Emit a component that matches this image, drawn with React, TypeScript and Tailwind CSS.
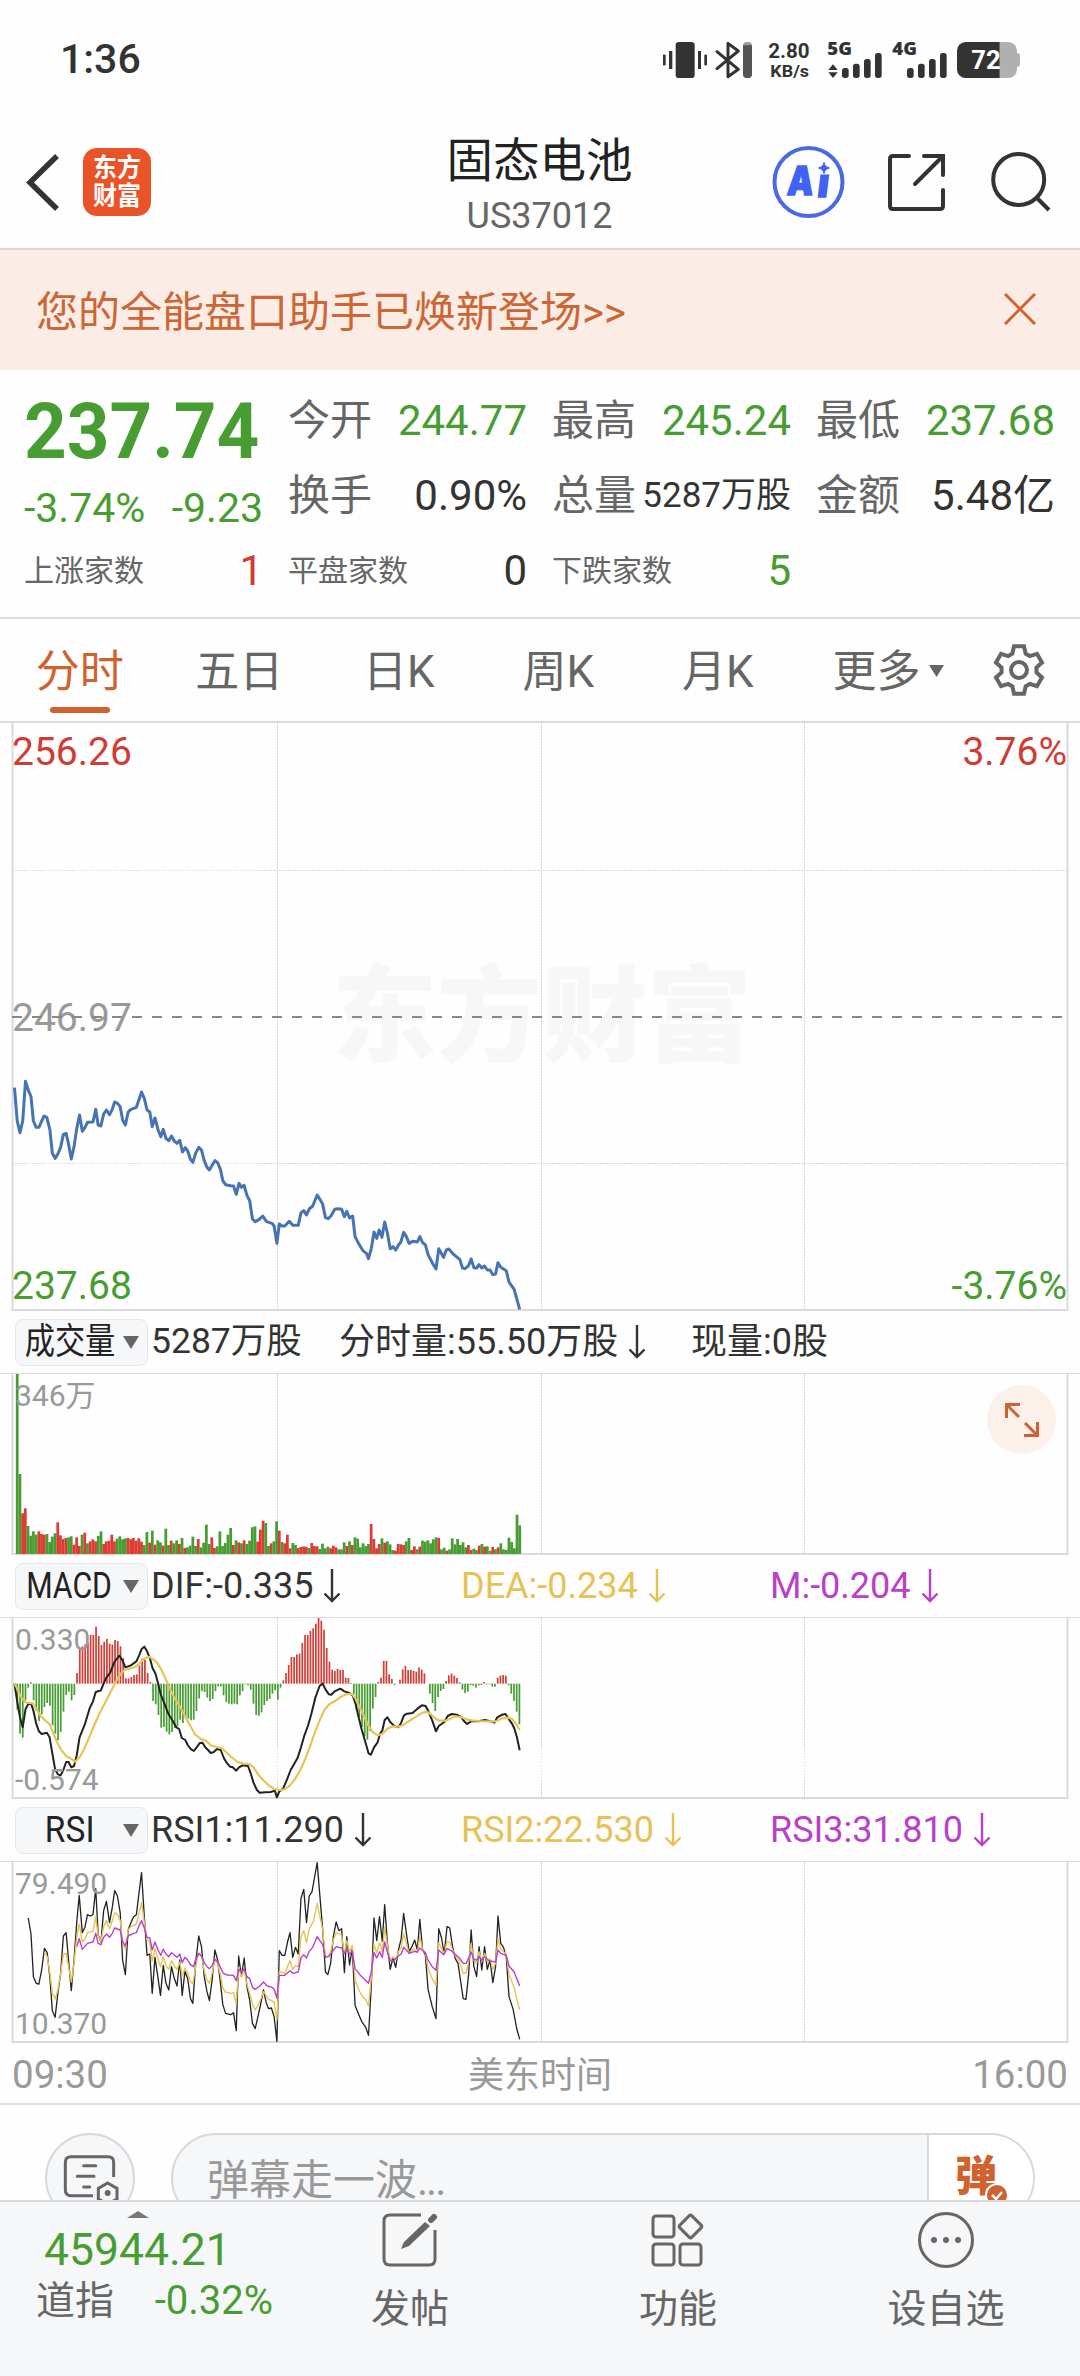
import React from "react";

const FONT = "font-['Roboto','Noto_Sans_CJK_SC',sans-serif]";

const PRICE =
  "42,143 50,243 58,278 66,243 74,124 82,150 90,170 97,243 105,262 113,262 121,243 128,228 136,232 145,270 152,340 160,355 168,342 176,322 184,283 192,280 199,312 207,357 215,320 223,265 231,225 239,274 247,262 254,247 270,246 278,208 285,255 293,258 301,222 309,210 318,224 326,208 333,186 341,190 349,200 356,240 364,255 372,217 380,208 396,202 404,178 411,156 419,175 427,210 435,216 442,260 450,234 459,270 467,290 474,268 482,295 490,302 498,288 506,303 514,310 522,301 530,336 538,323 545,333 553,358 560,367 568,340 577,322 585,330 593,362 601,382 608,390 616,376 624,362 632,368 640,388 647,422 655,434 670,437 678,438 686,463 694,430 701,442 709,436 717,466 725,482 733,537 741,545 752,539 763,528 774,545 790,550 796,558 804,610 811,552 819,558 827,558 840,544 850,556 866,556 874,518 882,512 890,525 898,507 908,498 921,465 929,478 937,493 945,533 953,536 961,528 972,508 982,506 992,508 1000,530 1007,514 1015,534 1024,528 1031,590 1040,608 1054,632 1064,640 1070,656 1078,626 1086,576 1094,595 1101,570 1109,592 1117,546 1125,580 1133,626 1141,620 1149,630 1157,615 1164,606 1172,577 1180,590 1188,610 1198,604 1212,606 1219,590 1227,608 1235,614 1243,644 1255,668 1266,687 1274,626 1288,652 1296,630 1303,627 1318,644 1335,658 1343,684 1350,686 1360,678 1368,657 1376,683 1384,684 1391,674 1399,684 1407,678 1415,690 1423,690 1431,704 1439,702 1446,668 1454,682 1470,692 1478,726 1493,748 1501,778 1509,808";

// Minute volumes; a negative number is a red bar.
const VOLUME = [
  540, 240, -122, -137, 84, 55, 68, 58, -68, -60, -58, 60, 36, 52, 62, -95, -56, -45, -48, 50, 53, -28, -50, -24, 58, -64, 32, -38, -44, -38,
  54, 68, -30, -38, -40, -58, -38, 46, 53, 44, 47, -48, -44, -48, -40, -47, -37, 27, 66, -34, 70, -28, 41, 35, -25, 76, 27, -40, 32, 41, -30,
  48, -18, 20, 25, 52, 24, -45, 20, 34, 88, 30, -50, -18, 23, 68, 24, 33, 58, 78, -27, 41, -35, 32, -41, 30, 40, 80, 83, -37, -73, -100, 93,
  24, -32, 38, 98, -70, 36, -32, -58, -17, 33, 27, -18, -21, -23, -21, 18, -33, -24, -23, 15, 31, 17, 22, -17, -25, -20, 14, 14, 35, -24, 38,
  -27, 50, 46, 20, 32, 24, 30, -90, -45, -17, -30, 47, -34, 38, 29, 12, -10, -30, -29, -27, 38, 48, -12, -23, 14, -22, 40, 37, 41, 32, 44,
  50, -48, 14, 19, -10, 14, 47, 29, 45, 27, 35, 20, -27, -12, 16, 12, -25, 30, -22, 23, 10, -21, 14, -20, 32, 14, 12, 49, 36, 17, 118, 86,
];

const MACD = [
  0, -78, -150, -162, -50, -12, 4, -50, -82, -112, -92, -70, -58, -66, -125, -150, -170, -145, -84, -34, -24, -50, -34, 32, 108, 112, 118,
  122, 146, 146, 171, 143, 116, 126, 134, 120, 117, 131, 128, 112, 77, 16, 16, 20, 26, 28, 54, 75, 72, 32, 5, -52, -62, -94, -132, -130, -144,
  -152, -145, -133, -128, -108, -118, -102, -105, -110, -108, -82, -44, -22, -25, -42, -52, -46, -22, -8, -8, -35, -55, -60, -62, -60, -62,
  -35, -22, -2, -5, -18, -60, -94, -96, -86, -64, -52, -46, -30, -20, -48, -12, 10, 32, 56, 80, 80, 88, 90, 122, 146, 146, 158, 166, 180, 197,
  189, 162, 107, 66, 42, 38, 44, 41, 41, 18, 17, 2, -32, -78, -100, -130, -158, -168, -142, -75, -40, 5, 18, 68, 68, 28, 14, -4, 0, 12, 43,
  53, 41, 41, 38, 36, 49, 42, 31, 0, -30, -58, -82, -40, -22, -16, 8, 25, 30, 24, 17, 4, -18, -28, -24, -4, -6, -12, -5, -4, 5, -2, -2, -9,
  -9, 18, 24, 26, 24, -5, -30, -52, -84, -122,
];

const DIF =
  "42,371 50,425 58,472 66,502 74,448 82,432 90,430 97,452 105,490 113,514 121,522 136,518 144,532 152,580 160,628 168,643 176,646 184,630 192,606 199,606 207,622 215,618 223,585 231,532 246,494 260,446 270,424 278,396 293,391 301,370 309,352 320,338 333,304 347,287 356,302 364,322 380,316 396,304 404,286 412,266 419,260 427,274 435,294 443,325 451,340 459,370 467,404 475,424 489,462 500,480 512,502 520,507 528,534 538,540 545,555 555,568 563,573 571,562 580,549 588,548 596,562 604,570 612,579 620,577 630,567 641,570 650,594 658,608 668,620 676,622 686,632 694,622 704,616 720,618 728,640 736,668 746,690 754,698 770,697 786,696 798,692 804,712 811,694 822,686 832,662 844,630 864,594 874,562 884,526 894,498 904,462 916,412 928,378 937,371 945,388 955,403 962,404 972,394 988,386 1000,394 1012,398 1024,406 1032,430 1040,466 1050,508 1062,550 1070,580 1077,584 1086,562 1096,548 1104,520 1110,512 1117,480 1125,472 1133,486 1145,498 1157,502 1165,488 1173,466 1182,461 1198,459 1212,446 1225,436 1236,438 1244,454 1256,484 1266,514 1274,498 1290,486 1300,468 1312,462 1326,464 1338,470 1348,484 1356,492 1368,484 1390,484 1408,480 1424,484 1436,488 1444,472 1458,464 1468,462 1478,478 1486,490 1493,504 1501,532 1509,571";
const DEA =
  "42,371 50,386 60,410 74,427 95,430 105,446 118,468 132,482 145,494 155,520 165,545 178,570 192,588 206,596 218,605 232,590 246,563 260,530 275,492 290,458 305,428 320,398 335,368 349,343 362,330 378,325 392,321 404,312 418,296 432,290 444,297 456,308 468,328 480,354 492,384 505,411 520,436 535,464 550,493 566,523 582,536 598,542 612,556 628,561 645,565 660,580 675,594 690,606 706,611 724,612 736,622 750,644 764,660 780,676 796,687 812,690 826,688 840,678 856,658 872,630 886,598 900,560 914,518 928,482 942,450 956,433 972,424 990,410 1008,402 1022,402 1032,416 1044,440 1056,466 1068,494 1082,516 1096,526 1110,522 1126,506 1140,499 1158,500 1172,494 1188,483 1204,473 1220,462 1238,454 1250,462 1262,474 1276,482 1292,482 1306,477 1322,469 1338,471 1354,478 1370,481 1392,483 1424,484 1440,484 1456,476 1474,473 1486,476 1496,488 1509,510";

const RSI1 =
  "82,354 90,402 97,530 105,550 113,552 121,510 129,445 137,458 145,535 152,632 160,652 168,580 176,520 184,408 192,398 199,480 207,572 215,480 223,365 230,286 239,398 247,380 254,344 262,348 270,344 278,266 285,405 293,426 301,332 309,304 318,368 326,322 333,272 341,288 349,338 356,480 364,524 372,390 380,368 388,350 396,344 404,276 411,218 419,350 427,466 435,462 442,580 450,472 459,535 466,586 474,496 482,550 490,570 498,500 506,535 514,558 522,480 529,586 537,514 545,536 553,596 560,610 568,490 577,408 585,440 593,530 601,575 608,602 616,540 624,450 632,480 640,548 647,614 655,640 670,644 678,638 686,692 693,468 701,530 709,474 717,560 725,600 733,670 741,686 749,650 757,612 765,570 773,608 780,626 788,624 796,650 804,724 811,452 819,466 827,466 835,426 842,398 850,472 858,442 866,462 874,295 882,268 890,368 898,288 906,275 914,228 921,188 929,290 937,388 945,516 952,524 960,490 968,410 976,366 984,392 992,386 1000,518 1007,410 1015,495 1023,446 1031,616 1040,640 1050,664 1062,682 1070,706 1078,560 1086,354 1094,422 1102,350 1110,424 1117,314 1125,430 1133,508 1141,474 1149,502 1157,450 1165,416 1172,340 1180,400 1188,455 1196,440 1204,420 1212,450 1219,358 1227,448 1235,464 1243,568 1255,620 1266,656 1274,386 1282,414 1290,462 1298,380 1306,384 1314,440 1322,476 1330,490 1337,540 1345,596 1353,598 1361,520 1368,390 1376,500 1384,530 1391,440 1399,510 1407,440 1415,508 1423,480 1431,548 1439,500 1446,348 1454,430 1462,442 1470,470 1478,590 1490,628 1500,684 1509,718";
const RSI2 =
  "129,456 137,470 145,520 152,580 160,597 168,570 176,520 184,464 192,460 199,500 207,546 215,490 223,410 230,372 239,426 247,418 254,398 270,394 278,350 285,408 293,424 301,380 309,362 318,386 326,362 333,338 341,344 349,362 356,425 364,448 372,390 380,380 396,372 404,338 411,308 419,366 427,420 435,425 442,484 450,446 459,478 466,500 474,470 482,496 490,508 498,482 506,498 514,508 522,486 529,528 537,504 545,520 553,544 560,552 568,500 577,460 585,470 593,512 601,540 608,550 616,520 624,478 632,492 640,524 647,564 655,576 670,580 678,578 686,612 693,502 701,530 709,510 717,552 725,580 733,612 741,630 749,616 757,598 765,575 780,598 796,606 804,660 811,514 827,520 842,482 850,508 858,498 866,500 874,410 882,392 890,428 898,386 910,364 921,310 929,350 937,388 945,468 952,470 960,456 968,420 976,398 992,406 1000,462 1007,422 1015,456 1023,436 1031,540 1042,570 1054,592 1062,598 1070,618 1078,536 1086,434 1094,458 1102,428 1110,456 1117,382 1125,436 1133,482 1141,470 1149,480 1157,455 1165,442 1172,402 1180,430 1188,460 1200,446 1212,458 1219,410 1227,448 1235,458 1243,504 1255,536 1266,556 1274,428 1290,462 1298,424 1306,428 1318,460 1334,485 1345,520 1353,520 1361,484 1368,430 1376,480 1384,490 1391,455 1399,484 1407,460 1415,484 1423,476 1431,508 1439,490 1446,416 1454,448 1470,462 1478,524 1493,562 1501,598 1509,630";
const RSI3 =
  "223,440 230,416 239,448 254,430 270,426 278,400 285,430 293,434 301,412 309,402 318,412 326,400 333,384 349,390 356,424 364,438 372,408 388,400 396,398 404,376 411,362 419,384 427,412 435,414 442,450 450,426 459,450 467,466 474,448 482,462 490,470 498,458 514,472 522,462 529,488 537,472 545,480 553,494 562,500 568,478 577,460 585,468 593,488 601,500 608,506 616,496 624,478 632,484 640,502 648,520 660,525 678,526 686,542 693,508 701,516 709,506 717,530 725,536 733,562 741,568 755,558 765,546 776,558 790,562 796,568 804,594 811,526 827,526 842,512 850,520 866,516 874,474 882,464 890,474 898,454 908,442 921,410 937,434 945,472 955,470 965,455 976,440 992,444 1000,460 1007,448 1015,462 1023,454 1031,506 1045,524 1058,538 1070,550 1078,516 1086,458 1094,474 1102,455 1110,472 1117,426 1125,458 1133,482 1145,480 1157,468 1165,462 1172,442 1188,460 1204,454 1212,456 1219,444 1235,458 1243,480 1255,500 1266,511 1274,450 1288,464 1298,446 1310,452 1334,474 1345,490 1354,490 1368,456 1376,478 1384,480 1391,470 1399,480 1407,470 1420,482 1439,486 1446,450 1454,460 1470,466 1478,498 1493,516 1509,558";

const GEAR = Array.from({ length: 6 }, (_, i) => {
  const a = (i * Math.PI) / 3;
  return [[-20, -49], [-15, -71], [15, -71], [20, -49]]
    .map(([x, y]) => `${(x * Math.cos(a) - y * Math.sin(a)).toFixed(1)},${(x * Math.sin(a) + y * Math.cos(a)).toFixed(1)}`)
    .join(" ");
}).join(" ");

function Line({ points, color, width }: { points: string; color: string; width: number }) {
  return <polyline points={points} fill="none" stroke={color} strokeWidth={width} strokeLinejoin="round" vectorEffect="non-scaling-stroke" />;
}

function Grid({ h }: { h: number }) {
  return (
    <g shapeRendering="crispEdges">
      {[277.5, 541.5, 804.5].map((x) => (
        <line key={x} x1={x} x2={x} y1={0} y2={h} stroke="#d4d4d4" strokeDasharray="1.5 1.5" />
      ))}
    </g>
  );
}

function Frame({ h }: { h: number }) {
  return <path d={`M12.5 0V${h - 1}H1067.5V0`} fill="none" stroke="#dadada" strokeWidth="2" />;
}

function DownArrow() {
  return (
    <svg className="ml-[10px] h-[36px] w-[18px]" viewBox="0 0 18 36" fill="none" stroke="currentColor" strokeWidth="2.4">
      <path d="M9 1V33M1.5 25.5L9 33L16.5 25.5" />
    </svg>
  );
}

function IndicatorBar({ name, squeeze, children }: { name: string; squeeze?: boolean; children: React.ReactNode }) {
  return (
    <div className="flex h-[62px] items-center pl-[15px] text-[36px] text-[#333]">
      <div className="flex h-[47px] w-[133px] items-center rounded-lg border border-[#e4e6ea] bg-[#f6f7f9] text-[#222]">
        <div className="flex w-[107px] justify-center">
          <span className={squeeze ? "scale-x-[0.84] whitespace-nowrap" : "scale-x-[0.93] whitespace-nowrap"}>{name}</span>
        </div>
        <svg className="h-[13px] w-[16px]" viewBox="0 0 16 13">
          <path d="M0 0H16L8 13Z" fill="#666" />
        </svg>
      </div>
      {children}
    </div>
  );
}

function Reading({ className, text }: { className: string; text: string }) {
  return (
    <div className={"flex items-center whitespace-nowrap " + className}>
      {text}
      <DownArrow />
    </div>
  );
}

function Quote({ label, value, color, small }: { label: string; value: string; color: string; small?: boolean }) {
  return (
    <div className="flex h-[75px] items-center justify-between whitespace-nowrap">
      <span className="text-[42px] text-[#666]">{label}</span>
      <span className={(small ? "text-[35px] " : "text-[42px] ") + color}>{value}</span>
    </div>
  );
}

function Count({ label, value, color }: { label: string; value: string; color: string }) {
  return (
    <div className="flex h-[75px] items-center justify-between">
      <span className="text-[30px] text-[#666]">{label}</span>
      <span className={"text-[42px] " + color}>{value}</span>
    </div>
  );
}

function StatusIcons() {
  return (
    <svg className="ml-auto mr-[56px] h-[40px] w-[364px] overflow-visible" viewBox="60 60 1092 120" fill="#333">
      <rect x="69" y="104" width="8" height="32" />
      <rect x="87" y="93" width="10" height="54" />
      <rect x="107" y="66" width="57" height="108" rx="10" />
      <rect x="174" y="93" width="9" height="54" />
      <rect x="193" y="104" width="8" height="32" />
      <path d="M231 95L295 148L264 170V70L295 93L231 146" fill="none" stroke="#333" strokeWidth="9" strokeLinecap="round" strokeLinejoin="round" />
      <rect x="309" y="66" width="27" height="108" rx="12" fill="#999" />
      <path d="M309 76H336V162a12 12 0 0 1-12 12h-3a12 12 0 0 1-12-12Z" fill="#555" />
      <g fontFamily="Roboto" fontWeight="700">
        <text x="385" y="113" fontSize="60" textLength="124" lengthAdjust="spacingAndGlyphs">2.80</text>
        <text x="391" y="170" fontSize="51" textLength="116" lengthAdjust="spacingAndGlyphs">KB/s</text>
      </g>
      <g fontFamily="Open Sans" fontWeight="800" fontSize="51">
        <text x="562" y="106" textLength="74" lengthAdjust="spacingAndGlyphs">5G</text>
        <text x="757" y="106" textLength="74" lengthAdjust="spacingAndGlyphs">4G</text>
      </g>
      <path d="M579 133L593 150H565ZM579 174L593 157H565Z" />
      {[606, 801].map((x) => (
        <g key={x}>
          <rect x={x} y="144" width="20" height="30" rx="8" />
          <rect x={x + 33} y="131" width="20" height="43" rx="8" />
          <rect x={x + 66} y="117" width="20" height="57" rx="8" />
          <rect x={x + 99} y="99" width="20" height="75" rx="8" />
        </g>
      ))}
      <path d="M1079 66h26a26 26 0 0 1 26 26v8h3a6 6 0 0 1 6 6v28a6 6 0 0 1-6 6h-3v8a26 26 0 0 1-26 26h-26Z" fill="#b0b0b0" />
      <path d="M1079 66H977a26 26 0 0 0-26 26v56a26 26 0 0 0 26 26h102Z" />
      <text x="994" y="147" fontFamily="Roboto" fontWeight="700" fontSize="80" fill="#fff" textLength="88" lengthAdjust="spacingAndGlyphs">72</text>
    </svg>
  );
}

function Header() {
  return (
    <div className="flex h-[132px] items-center">
      <svg className="mb-[2px] ml-[24px] h-[60px] w-[40px]" viewBox="0 0 40 60" fill="none" stroke="#333" strokeWidth="5.5">
        <path d="M33 5L6 31.500L33 58" />
      </svg>
      <div className="ml-[19px] flex size-[68px] items-center justify-center rounded-[14px] bg-[#ea5328]">
        <div className="flex scale-y-[1.08] flex-col text-[24px] font-bold leading-[26px] text-white">
          <span>东方</span>
          <span>财富</span>
        </div>
      </div>
      <div className="ml-[216px] flex w-[347px] flex-col items-center self-start pr-[2px]">
        <div className="mt-[15px] h-[60px] text-[46.500px] leading-[60px] text-[#222]">固态电池</div>
        <div className="h-[50px] text-[36px] leading-[50px] text-[#666]">US37012</div>
      </div>
      <svg className="ml-[54px] h-[80px] w-[290px]" viewBox="768 141 290 80" fill="none" stroke="#333" strokeWidth="4">
        <circle cx="808.5" cy="181" r="34" stroke="#4a69e2" />
        <g stroke="#4262f5" strokeWidth="1.5" fill="#4262f5" fontFamily="Inter" fontWeight="900" fontSize="40">
          <text transform="translate(786.500 194) skewX(-5)" textLength="26" lengthAdjust="spacingAndGlyphs">A</text>
          <text transform="translate(816.500 196) skewX(-7)" textLength="11" lengthAdjust="spacingAndGlyphs">ı</text>
        </g>
        <path d="M824 161.500C825 165 826 166 829.500 167C826 168 825 169 824 172.500C823 169 822 168 818.500 167C822 166 823 165 824 161.500Z" fill="#4262f5" stroke="#4262f5" strokeWidth="1" />
        <g strokeLinecap="round">
          <path d="M909 155H893Q890 155 890 158V205Q890 208 893 208H940Q943 208 943 205V189" />
          <path d="M924 155H943V174M942 156L915 183" />
        </g>
        <circle cx="1018.7" cy="178.5" r="25.5" />
        <path d="M1037 197L1049 209" />
      </svg>
    </div>
  );
}

const TABS = ["分时", "五日", "日K", "周K", "月K"];

export default function App() {
  return (
    <div className={"flex h-[2376px] w-[1080px] flex-col overflow-hidden bg-[#fefefe] leading-none " + FONT}>
      <div className="flex h-[116px] items-center pt-[3px]">
        <div className="ml-[60px] text-[41px] font-medium text-[#333]">1:36</div>
        <StatusIcons />
      </div>
      <Header />

      <div className="flex h-[122px] items-center justify-between border-t-2 border-[#d8d8da] bg-[#fbede5] pl-[36px] pr-[44px] text-[42px] text-[#ce6535]">
        <span className="pt-[6px]">您的全能盘口助手已焕新登场&gt;&gt;</span>
        <svg className="mb-[3px] size-[32px]" viewBox="0 0 32 32" fill="none" stroke="#d0622f" strokeWidth="3">
          <path d="M1 1L31 31M31 1L1 31" />
        </svg>
      </div>

      <div className="grid h-[249px] grid-cols-[239px_239px_239px_239px] gap-x-[25px] border-b-2 border-[#dcdcdc] pl-[24px] pt-[13px]">
        <div className="flex flex-col text-[#489d32]">
          <div className="flex h-[97px] items-center text-[78px] font-bold">
            <span className="origin-left scale-x-[0.955]">237.74</span>
          </div>
          <div className="flex h-[53px] items-center justify-between whitespace-nowrap pt-[3px] text-[41px]">
            <span>-3.74%</span>
            <span>-9.23</span>
          </div>
          <Count label="上涨家数" value="1" color="text-[#d03c34]" />
        </div>
        <div>
          <Quote label="今开" value="244.77" color="text-[#489d32]" />
          <Quote label="换手" value="0.90%" color="text-[#333]" />
          <Count label="平盘家数" value="0" color="text-[#333]" />
        </div>
        <div>
          <Quote label="最高" value="245.24" color="text-[#489d32]" />
          <Quote label="总量" value="5287万股" color="text-[#333]" small />
          <Count label="下跌家数" value="5" color="text-[#489d32]" />
        </div>
        <div>
          <Quote label="最低" value="237.68" color="text-[#489d32]" />
          <Quote label="金额" value="5.48亿" color="text-[#333]" />
        </div>
      </div>

      <div className="flex h-[104px] border-b-2 border-[#dcdcdc] text-[44px] text-[#666]">
        {TABS.map((t, i) => (
          <div key={t} className={"relative flex w-[159.5px] items-center justify-center pt-[4px] " + (i === 0 ? "text-[#d0622f]" : "")}>
            {t}
            {i === 0 && <div className="absolute bottom-[8px] h-[6px] w-[60px] rounded-full bg-[#d0622f]" />}
          </div>
        ))}
        <div className="flex items-center pl-[35px] pt-[4px]">
          更多
          <svg className="mb-[3px] ml-[8px] h-[12px] w-[15px]" viewBox="0 0 15 12">
            <path d="M0 0H15L7.5 12Z" fill="#666" />
          </svg>
        </div>
        <svg className="ml-[48px] mt-[24px] size-[54px]" viewBox="-81 -81 162 162" fill="none" stroke="#666" strokeWidth="12">
          <polygon points={GEAR} />
          <circle r="24" />
        </svg>
      </div>

      <div className="relative h-[588px] text-[39px]">
        <div className="absolute left-[332px] top-[230px] flex text-[105px] font-black leading-[130px] text-[#f7f7f7]">东方财富</div>
        <svg className="absolute left-0 top-0" width="1080" height="588">
          <Grid h={587} />
          <g shapeRendering="crispEdges" stroke="#d8d8d8" strokeDasharray="1.5 1.5">
            <line x1="12" x2="1068" y1="147.5" y2="147.5" />
            <line x1="12" x2="1068" y1="440.5" y2="440.5" />
          </g>
          <Frame h={588} />
        </svg>
        <div className="absolute left-[12px] top-[10px] text-[#d03c34]">256.26</div>
        <div className="absolute right-[13px] top-[10px] text-[#d03c34]">3.76%</div>
        <div className="absolute left-[12px] top-[276px] text-[#999]">246.97</div>
        <div className="absolute left-[12px] top-[544px] text-[#489d32]">237.68</div>
        <div className="absolute right-[13px] top-[544px] text-[#489d32]">-3.76%</div>
        <svg className="absolute left-0 top-0" width="1080" height="588">
          <line x1="12" x2="1064" y1="294" y2="294" stroke="#888" strokeWidth="2" strokeDasharray="10 10" />
          <g transform="translate(0 317) scale(.34439 .33333)">
            <Line points={PRICE} color="#4573b3" width={3} />
          </g>
        </svg>
      </div>

      <IndicatorBar name="成交量" squeeze>
        <span className="ml-[3px] w-[188px] whitespace-nowrap text-[35.500px]">5287万股</span>
        <Reading className="w-[352px]" text="分时量:55.50万股" />
        <span>现量:0股</span>
      </IndicatorBar>
      <div className="relative h-[182px] border-t border-[#dcdcdc] text-[30px] text-[#999]">
        <svg className="absolute left-0 top-0" width="1080" height="181">
          <Grid h={180} />
          <Frame h={181} />
          <g transform="translate(0 -74) scale(.34439 .33333)">
            {VOLUME.map((v, i) => (
              <rect key={i} x={46 + i * 7.845} y={762 - Math.abs(v)} width="8" height={Math.abs(v)} fill={v < 0 ? "#dc3c32" : "#489d32"} />
            ))}
          </g>
        </svg>
        <div className="absolute left-[15px] top-[7px]">346万</div>
        <div className="absolute right-[24px] top-[11px] flex size-[69px] items-center justify-center rounded-full bg-[#fbf1ea]">
          <svg className="size-[34px]" viewBox="0 0 34 34" fill="none" stroke="#ce6233" strokeWidth="3">
            <path d="M1.5 15V1.5H15M1.5 1.5L14 14M32.500 19V32.500H19M32.500 32.500L20 20" />
          </svg>
        </div>
      </div>

      <IndicatorBar name="MACD" squeeze>
        <Reading className="ml-[3px] w-[310px]" text="DIF:-0.335" />
        <Reading className="w-[309px] text-[#e6c255]" text="DEA:-0.234" />
        <Reading className="text-[#b940c8]" text="M:-0.204" />
      </IndicatorBar>
      <div className="relative h-[182px] border-t border-[#dcdcdc] text-[30px] text-[#999]">
        <svg className="absolute left-0 top-0" width="1080" height="181">
          <Grid h={180} />
          <Frame h={181} />
          <g transform="translate(0 -58) scale(.34439 .33333)">
            {MACD.map((v, i) => (
              <rect key={i} x={40 + i * 7.88} y={v > 0 ? 371 - v : 371} width="5" height={Math.abs(v)} fill={v > 0 ? "#d04038" : "#489d32"} />
            ))}
            <Line points={DIF} color="#222" width={2} />
            <Line points={DEA} color="#e6c455" width={2.2} />
          </g>
        </svg>
        <div className="absolute left-[15px] top-[7px]">0.330</div>
        <div className="absolute bottom-[4px] left-[15px]">-0.574</div>
      </div>

      <IndicatorBar name="RSI">
        <Reading className="ml-[3px] w-[310px]" text="RSI1:11.290" />
        <Reading className="w-[309px] text-[#e6c255]" text="RSI2:22.530" />
        <Reading className="text-[#b940c8]" text="RSI3:31.810" />
      </IndicatorBar>
      <div className="relative h-[182px] border-t border-[#dcdcdc] text-[30px] text-[#999]">
        <svg className="absolute left-0 top-0" width="1080" height="181">
          <Grid h={180} />
          <Frame h={181} />
          <g transform="translate(0 -62) scale(.34439 .33333)">
            <Line points={RSI1} color="#222" width={1.3} />
            <Line points={RSI2} color="#e6c455" width={1.4} />
            <Line points={RSI3} color="#b940c8" width={1.4} />
          </g>
        </svg>
        <div className="absolute left-[15px] top-[7px]">79.490</div>
        <div className="absolute bottom-[4px] left-[15px]">10.370</div>
      </div>

      <div className="grid h-[62px] grid-cols-3 items-center border-b-2 border-[#dcdcdc] px-[12px] pt-[5px] text-[38.500px] text-[#999]">
        <span>09:30</span>
        <span className="text-center text-[36px]">美东时间</span>
        <span className="text-right">16:00</span>
      </div>

      <div className="flex h-[95px] overflow-hidden pl-[45px] pt-[28px]">
        <div className="flex size-[90px] shrink-0 rounded-full border-2 border-[#d6d8dc] bg-[#f6f7f9]">
          <svg className="ml-[16px] mt-[18px] h-[50px] w-[58px]" viewBox="70 84 174 150" fill="none" stroke="#666" strokeWidth="9">
            <path d="M160 212H94Q77 212 77 195V112Q77 95 94 95H205Q222 95 222 112V156" />
            <g strokeLinecap="round">
              <path d="M132 122H168M113 154H163M132 186H150" />
            </g>
            <path d="M204 174L232 190V222L204 238L176 222V190Z" />
            <circle cx="204" cy="204" r="9" fill="#666" stroke="none" />
          </svg>
        </div>
        <div className="ml-[36px] flex h-[90px] w-[864px] shrink-0 overflow-hidden rounded-full border-2 border-[#d6d8dc] bg-[#f6f7f9]">
          <div className="flex flex-1 items-center pl-[34px] pt-[6px] text-[42px] text-[#999]">
            弹幕走一波<span className="tracking-[-2px]">...</span>
          </div>
          <div className="relative w-[106px] border-l-2 border-[#d6d8dc] bg-white pl-[26px] pt-[21px] text-[42px] font-black text-[#d0622f]">
            弹
            <svg className="absolute left-[56px] top-[48px] size-[24px]" viewBox="0 0 24 24">
              <circle cx="12" cy="12" r="11" fill="#d0622f" stroke="#fff" strokeWidth="2" />
              <path d="M7 12L11 16L17 9" fill="none" stroke="#fff" strokeWidth="2.5" />
            </svg>
          </div>
        </div>
      </div>

      <div className="flex h-[176px] border-t-2 border-[#d8dade] bg-[#f6f7f9] text-[39px] text-[#666]">
        <div className="w-[276px]">
          <svg className="ml-[127px] mt-[9px] h-[7px] w-[22px]" viewBox="0 0 22 7">
            <path d="M0 7L11 0L22 7Z" fill="#777" />
          </svg>
          <div className="ml-[44px] mt-[7px] h-[50px] text-[44.500px] leading-[50px] text-[#489d32]">45944.21</div>
          <div className="ml-[36px] mt-[1px] flex h-[50px] w-[237px] items-center justify-between">
            <span>道指</span>
            <span className="text-[40px] text-[#489d32]">-0.32%</span>
          </div>
        </div>
        <div className="flex w-[268px] flex-col items-center pt-[11px]">
          <svg className="h-[54px] w-[56px]" viewBox="0 0 56 54" fill="none" stroke="#666" strokeWidth="3">
            <path d="M39 2H8Q2 2 2 8V46Q2 52 8 52H47Q53 52 53 46V17" />
            <path d="M43 9L22 29L19 36L27 33L48 13Z" fill="#666" stroke="none" />
            <path d="M49 7L52 4" strokeWidth="6" strokeLinecap="round" />
          </svg>
          <div className="mt-[23px]">发帖</div>
        </div>
        <div className="flex w-[268px] flex-col items-center pt-[11px]">
          <svg className="h-[54px] w-[54px]" viewBox="0 0 54 54" fill="none" stroke="#666" strokeWidth="3">
            <rect x="2" y="3" width="21" height="21" rx="3" />
            <rect x="2" y="31" width="21" height="21" rx="3" />
            <rect x="29" y="31" width="21" height="21" rx="3" />
            <rect x="31" y="5" width="17" height="17" rx="2" transform="rotate(45 39.500 13.500)" />
          </svg>
          <div className="mt-[23px]">功能</div>
        </div>
        <div className="flex w-[268px] flex-col items-center pt-[10px]">
          <svg className="h-[56px] w-[56px]" viewBox="0 0 56 56" fill="none" stroke="#666" strokeWidth="3">
            <circle cx="28" cy="28" r="26.500" />
            <g fill="#666" stroke="none">
              <circle cx="16" cy="28" r="3" />
              <circle cx="28" cy="28" r="3" />
              <circle cx="40" cy="28" r="3" />
            </g>
          </svg>
          <div className="mt-[22px]">设自选</div>
        </div>
      </div>
    </div>
  );
}
